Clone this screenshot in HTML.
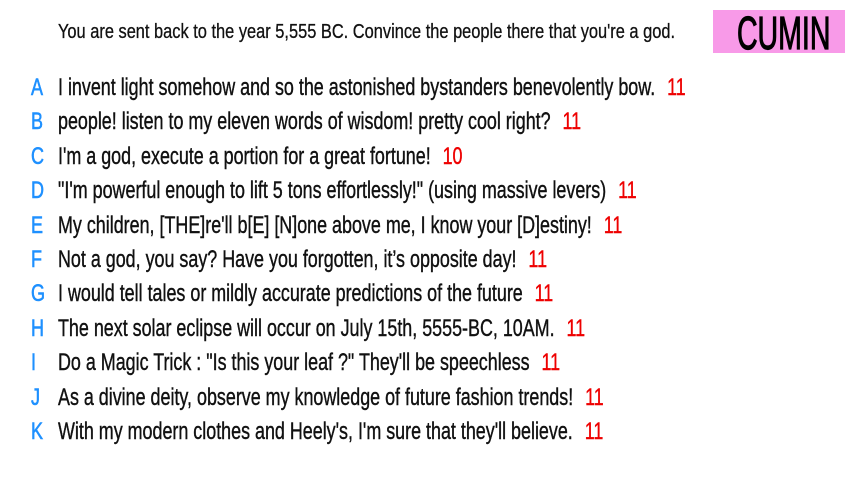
<!DOCTYPE html>
<html><head><meta charset="utf-8"><style>
body{margin:0;width:853px;height:480px;background:#fff;overflow:hidden;position:relative;font-family:"Liberation Sans",sans-serif;}
.t{position:absolute;left:58px;top:21px;font-size:20px;color:#111;white-space:nowrap;transform:scaleX(0.82);transform-origin:left;-webkit-text-stroke:0.3px #111;}
.box{position:absolute;left:713px;top:10px;width:132px;height:43px;background:#f89ae8;}
.box span{position:absolute;left:0;right:6px;top:-4px;text-align:center;font-size:46px;color:#000;transform:scaleX(0.62);-webkit-text-stroke:1.2px #000;}
.r{position:absolute;left:0;height:30px;white-space:nowrap;}
.l{position:absolute;left:31px;top:0;font-size:24px;color:#1e90ff;transform:scaleX(0.75);transform-origin:left;-webkit-text-stroke:0.6px #1e90ff;}
.x{position:absolute;left:58px;top:0;font-size:24px;color:#111;transform:scaleX(0.746);transform-origin:left;-webkit-text-stroke:0.4px #111;}
.n{color:#e00;margin-left:16px;-webkit-text-stroke:0.4px #e00;}
</style></head><body>
<div class="t">You are sent back to the year 5,555 BC. Convince the people there that you're a god.</div>
<div class="box"><span>CUMIN</span></div>
<div class="r" style="top:74px"><span class="l">A</span><span class="x">I invent light somehow and so the astonished bystanders benevolently bow.<span class="n">11</span></span></div>
<div class="r" style="top:108px"><span class="l">B</span><span class="x">people! listen to my eleven words of wisdom! pretty cool right?<span class="n">11</span></span></div>
<div class="r" style="top:143px"><span class="l">C</span><span class="x">I'm a god, execute a portion for a great fortune!<span class="n">10</span></span></div>
<div class="r" style="top:177px"><span class="l">D</span><span class="x">"I'm powerful enough to lift 5 tons effortlessly!" (using massive levers)<span class="n">11</span></span></div>
<div class="r" style="top:212px"><span class="l">E</span><span class="x">My children, [THE]re'll b[E] [N]one above me, I know your [D]estiny!<span class="n">11</span></span></div>
<div class="r" style="top:246px"><span class="l">F</span><span class="x">Not a god, you say? Have you forgotten, it’s opposite day!<span class="n">11</span></span></div>
<div class="r" style="top:280px"><span class="l">G</span><span class="x">I would tell tales or mildly accurate predictions of the future<span class="n">11</span></span></div>
<div class="r" style="top:315px"><span class="l">H</span><span class="x">The next solar eclipse will occur on July 15th, 5555-BC, 10AM.<span class="n">11</span></span></div>
<div class="r" style="top:349px"><span class="l">I</span><span class="x">Do a Magic Trick : "Is this your leaf ?" They'll be speechless<span class="n">11</span></span></div>
<div class="r" style="top:384px"><span class="l">J</span><span class="x">As a divine deity, observe my knowledge of future fashion trends!<span class="n">11</span></span></div>
<div class="r" style="top:418px"><span class="l">K</span><span class="x">With my modern clothes and Heely's, I'm sure that they'll believe.<span class="n">11</span></span></div>
</body></html>
